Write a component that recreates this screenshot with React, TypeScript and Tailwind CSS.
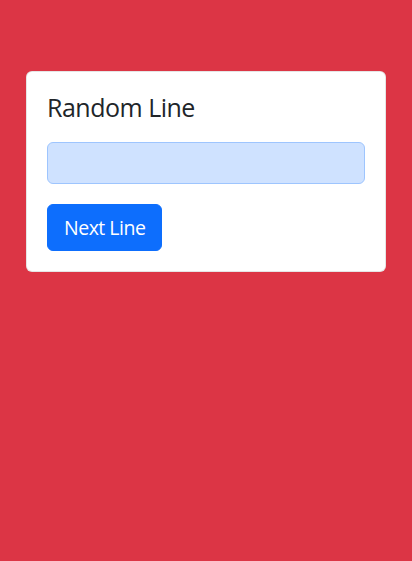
export default function App() {
  return (
    <main className="min-h-[561px] bg-[#dc3545] px-[26px] pt-[71px] font-['Open_Sans',sans-serif]">
      <div className="rounded-md border border-black/10 bg-white p-5">
        <h2 className="mb-5 text-[25px] leading-[30px] font-medium tracking-[-0.5px] text-[#212529]">Random Line</h2>
        <div className="mb-5 h-[42px] w-full rounded-md border border-[#9ec5fe] bg-[#cfe2ff]" />
        <button className="rounded-md border border-[#0d6efd] bg-[#0d6efd] px-4 py-2 text-[19.5px] leading-[29px] tracking-[-0.5px] text-white">
          Next Line
        </button>
      </div>
    </main>
  );
}
